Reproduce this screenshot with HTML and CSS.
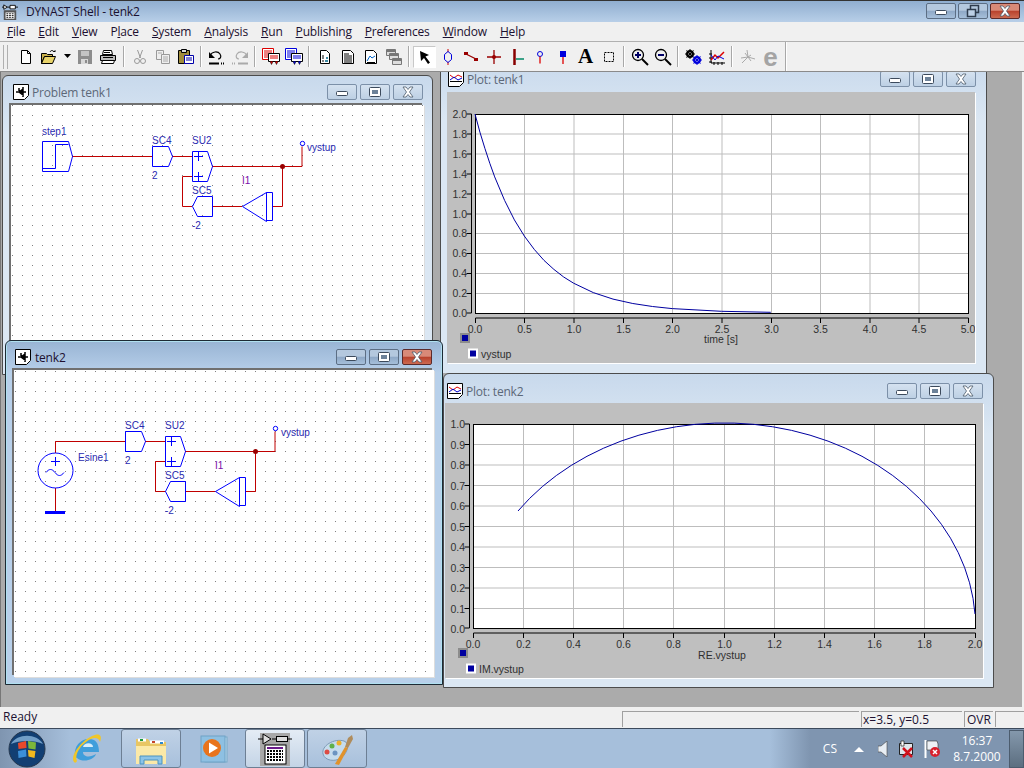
FILE: index.html
```html
<!DOCTYPE html>
<html lang="en">

<head>
    <meta charset="UTF-8">
    <title>DYNAST Shell - tenk2</title>
    <link rel="stylesheet" href="styles.css">
</head>

<body>
    <svg class="defs" width="0" height="0">
        <symbol id="g-min" viewBox="0 0 30 16"><rect x="9.500" y="7.500" width="11" height="4" rx="1" fill="#fff" stroke="#3c4a5c"/></symbol>
        <symbol id="g-max" viewBox="0 0 30 16"><rect x="9.500" y="3.500" width="11" height="9" rx="1" fill="#fff" stroke="#3c4a5c"/><rect x="12" y="6" width="6" height="4" fill="#6d8299"/></symbol>
        <symbol id="g-close" viewBox="0 0 30 16"><path d="M10 3h3l2 2.500 2-2.500h3l-3.500 5 3.500 5h-3l-2-2.500-2 2.500h-3l3.500-5z" fill="#fff" stroke="#4c5a6a" stroke-width=".8"/></symbol>
        <symbol id="g-restore" viewBox="0 0 30 16"><rect x="12.500" y="2.500" width="8" height="7" fill="none" stroke="#2e3c4e" stroke-width="1.500"/><rect x="9.500" y="6.500" width="8" height="7" fill="#bcd0e6" stroke="#2e3c4e" stroke-width="1.500"/></symbol>
        <symbol id="i-schem" viewBox="0 0 16 16"><path d="M.5.500h15v11l-4 4h-11z" fill="#fff" stroke="#000"/><path d="M3 8h3M10 5l-4 3 4 3zM10 3v10M10 8h3M6 4v3" stroke="#000" stroke-width="1.500" fill="#000"/></symbol>
        <symbol id="i-plot" viewBox="0 0 16 16"><path d="M.5.500h15v11l-4 4h-11z" fill="#fff" stroke="#000"/><path d="M2 4l4 3 4-3 4 2" stroke="#d00" fill="none"/><path d="M2 9l4-3 4 3 4-2" stroke="#00c" fill="none"/><path d="M2 10.500h12" stroke="#000"/></symbol>
        <pattern id="dots-a" width="10" height="10" patternUnits="userSpaceOnUse" x="2" y="5"><rect width="1" height="1" fill="#808080"/></pattern>
        <pattern id="dots-d" width="10" height="10" patternUnits="userSpaceOnUse" x="5" y="1"><rect width="1" height="1" fill="#808080"/></pattern>
    </svg>

    <header class="app-title">
        <svg class="app-icon" width="16" height="16" viewBox="0 0 18 18">
            <path d="M0 3.500h2M6 3.500h3M15 3.500h3M2 1v5l4-2.500zM9 1.500h6v4h-6z" stroke="#000" fill="#fff"/>
            <rect x="2" y="7" width="14" height="11" fill="#555"/>
            <path d="M4 9.500h10v7h-10z" fill="#fff"/>
            <path d="M5 11h2M8 11h2M11 11h2M5 13h2M8 13h2M11 13h2M5 15h2M8 15h2M11 15h2" stroke="#000"/>
        </svg>
        <span class="app-name">DYNAST Shell - tenk2</span>
        <div class="app-btns">
            <span class="capt capt-app"><svg width="30" height="16"><use href="#g-min"/></svg></span>
            <span class="capt capt-app"><svg width="30" height="16"><use href="#g-restore"/></svg></span>
            <span class="capt capt-app capt-red"><svg width="30" height="16"><use href="#g-close"/></svg></span>
        </div>
    </header>

    <nav class="menu">
        <span><u>F</u>ile</span>
        <span><u>E</u>dit</span>
        <span><u>V</u>iew</span>
        <span>P<u>l</u>ace</span>
        <span><u>S</u>ystem</span>
        <span><u>A</u>nalysis</span>
        <span><u>R</u>un</span>
        <span><u>P</u>ublishing</span>
        <span><u>P</u>references</span>
        <span><u>W</u>indow</span>
        <span><u>H</u>elp</span>
    </nav>

    <div class="toolbar">
        <div class="grip"></div>
        <!-- file -->
        <span class="tool"><svg width="16" height="16"><path d="M3.500 1.500h6l3 3v10h-9z" fill="#fff" stroke="#000"/><path d="M9.500 1.500v3h3" fill="none" stroke="#000"/></svg></span>
        <span class="tool"><svg width="18" height="16"><path d="M1.500 4.500h5l1 1h5v2h-8l-3 7z" fill="#c9b04a" stroke="#000"/><path d="M1.500 14.500l3-7h11l-3 7z" fill="#e8d36a" stroke="#000"/><path d="M10 3c1-2 3-2 4 0" fill="none" stroke="#000"/><path d="M12.500 3h3v-2z" fill="#000"/></svg></span>
        <span class="tool-drop"><svg width="8" height="5"><path d="M0 0h7l-3.500 4z" fill="#000"/></svg></span>
        <span class="tool"><svg width="16" height="16"><path d="M1 1h14v14h-14z" fill="#8d8d8d"/><path d="M4 2h8v5h-8z" fill="#c4c4c4"/><path d="M4 10h7v5h-7z" fill="#d8d8d8"/><path d="M8 11h2v3h-2z" fill="#8d8d8d"/></svg></span>
        <span class="tool"><svg width="18" height="16"><path d="M4.500 1.500h8l1 4h-10z" fill="#fff" stroke="#000"/><path d="M1.500 6.500h15v5h-15z" fill="#bbb" stroke="#000"/><path d="M3.500 11.500h12l-1 3h-12z" fill="#fff" stroke="#000"/><path d="M5 3.500h6M4 8.500h10" stroke="#000"/></svg></span>
        <i class="sep sep-wide"></i>
        <!-- edit, greyed out -->
        <span class="tool"><svg width="16" height="16" fill="none" stroke="#999"><path d="M5.500 1l3 8M10.500 1l-3 8"/><circle cx="5" cy="12" r="2.500"/><circle cx="11" cy="12" r="2.500"/></svg></span>
        <span class="tool"><svg width="16" height="16"><path d="M1.500 1.500h7v9h-7z" fill="#eee" stroke="#999"/><path d="M6.500 5.500h8v9h-8z" fill="#eee" stroke="#999"/><path d="M8 8h5M8 10h5M8 12h5M3 4h4" stroke="#aaa"/></svg></span>
        <span class="tool"><svg width="18" height="17"><path d="M1.500 2.500h11v13h-11z" fill="#a08c3c" stroke="#000"/><path d="M4.500 1.500h5v3h-5z" fill="#ddd" stroke="#000"/><path d="M7.500 7.500h9v8h-9z" fill="#fff" stroke="#00a"/><path d="M9 10h6M9 12h6" stroke="#00a"/></svg></span>
        <i class="sep"></i>
        <span class="tool"><svg width="18" height="16"><path d="M2 7c2-5 8-5 10-2 2 3 0 5-2 5" fill="none" stroke="#000" stroke-width="1.200"/><path d="M1 3v6h6z" fill="#000"/><path d="M1 14.500h10" stroke="#000" stroke-width="2"/><path d="M13 14.500h4" stroke="#000" stroke-dasharray="1 1" stroke-width="2"/></svg></span>
        <span class="tool"><svg width="18" height="16"><path d="M16 7c-2-5-8-5-10-2-2 3 0 5 2 5" fill="none" stroke="#aaa" stroke-width="1.200"/><path d="M17 3v6h-6z" fill="#aaa"/><path d="M7 14.500h10" stroke="#aaa" stroke-width="2"/><path d="M1 14.500h4" stroke="#aaa" stroke-dasharray="1 1" stroke-width="2"/></svg></span>
        <i class="sep"></i>
        <!-- run -->
        <span class="tool"><svg width="18" height="17"><path d="M.5.500h11v11h-11z" fill="#fff" stroke="#d00"/><path d="M2 3h8M2 5h8M2 7h8M2 9h8" stroke="#d00"/><path d="M6.500 5.500h11v8h-11z" fill="#fff" stroke="#000"/><path d="M8 8h8M8 10h8" stroke="#d00"/><path d="M8 13.500l1.500 3 1.500-3M13 13.500l1.500 3 1.500-3" fill="#d00" stroke="#000" stroke-width=".5"/></svg></span>
        <span class="tool"><svg width="18" height="17"><path d="M.5.500h11v11h-11z" fill="#fff" stroke="#00d"/><path d="M2 3h8M2 5h8M2 7h8M2 9h8" stroke="#00d"/><path d="M6.500 5.500h11v8h-11z" fill="#fff" stroke="#000"/><path d="M8 8h8M8 10h8" stroke="#00d"/><path d="M8 13.500l1.500 3 1.500-3M13 13.500l1.500 3 1.500-3" fill="#00d" stroke="#000" stroke-width=".5"/></svg></span>
        <i class="sep"></i>
        <!-- views -->
        <span class="tool"><svg width="16" height="16"><path d="M3.500 1.500h6l3 3v10h-9z" fill="#fff" stroke="#000"/><path d="M5 7h2M5 9h2M5 12h2" stroke="#000"/><path d="M9 9h2M8 12h3" stroke="#068" stroke-width="1.500"/></svg></span>
        <span class="tool"><svg width="16" height="16"><path d="M2.500 1.500h8l3 3v10h-11z" fill="#fff" stroke="#000"/><path d="M4 5h5M4 7h8M4 9h8M4 11h8M4 13h8" stroke="#000"/></svg></span>
        <span class="tool"><svg width="16" height="16"><path d="M2.500 1.500h8l3 3v10h-11z" fill="#fff" stroke="#000"/><path d="M4 12l3-5 2 2 3-2" fill="none" stroke="#06c"/><path d="M4 13.500h8" stroke="#000"/></svg></span>
        <span class="tool"><svg width="16" height="16" fill="#ddd" stroke="#777"><path d="M.5.500h9v6h-9z"/><path d="M3.500 4.500h9v6h-9z"/><path d="M6.500 9.500h9v6h-9z"/><path d="M1 2h8M4 6h8M7 11h8" stroke-width="2"/></svg></span>
        <i class="sep"></i>
        <!-- place tools -->
        <span class="tool tool-on"><svg width="16" height="16"><path d="M3 2l9 4-3.500 1.500 4.500 6-2 1.500-4-6-3 3z" fill="#000"/></svg></span>
        <span class="tool"><svg width="16" height="16" fill="none"><path d="M8 0v3M8 13v3" stroke="#c00"/><path d="M8 2.500l3.500 3v5l-3.500 3-3.500-3v-5z" stroke="#00d"/></svg></span>
        <span class="tool"><svg width="16" height="16"><path d="M3 5l10 5" stroke="#900" stroke-width="1.300"/><rect x="1" y="3" width="4" height="3" fill="#900"/><rect x="11" y="9" width="4" height="3" fill="#900"/></svg></span>
        <span class="tool"><svg width="16" height="16"><path d="M1 8h14M8 1v14" stroke="#900" stroke-width="1.300"/><circle cx="8" cy="8" r="2" fill="#900"/></svg></span>
        <span class="tool"><svg width="16" height="16"><path d="M5.500 0v16" stroke="#800" stroke-width="2.500"/><path d="M7 10h8" stroke="#086" stroke-width="1.500"/></svg></span>
        <span class="tool"><svg width="16" height="16" fill="none"><circle cx="8" cy="5" r="2.500" stroke="#00d"/><path d="M8 7.500v7" stroke="#d00" stroke-width="1.300"/></svg></span>
        <span class="tool"><svg width="16" height="16"><rect x="5" y="2" width="6" height="6" fill="#00d"/><path d="M8 8v7" stroke="#d00" stroke-width="1.300"/></svg></span>
        <span class="tool tool-a">A</span>
        <span class="tool"><svg width="16" height="16"><rect x="3.500" y="3.500" width="9" height="9" fill="none" stroke="#000" stroke-dasharray="2 1"/></svg></span>
        <i class="sep"></i>
        <!-- zoom -->
        <span class="tool"><svg width="18" height="18" fill="none"><circle cx="7" cy="7" r="5.500" stroke="#000" stroke-width="1.300"/><path d="M4 7h6M7 4v6" stroke="#006" stroke-width="2"/><path d="M11 11l6 6" stroke="#000" stroke-width="2"/></svg></span>
        <span class="tool"><svg width="18" height="18" fill="none"><circle cx="7" cy="7" r="5.500" stroke="#000" stroke-width="1.300"/><path d="M4 7h6" stroke="#006" stroke-width="2"/><path d="M11 11l6 6" stroke="#000" stroke-width="2"/></svg></span>
        <i class="sep"></i>
        <span class="tool"><svg width="18" height="16" fill="none"><circle cx="5" cy="5" r="3" stroke="#000" stroke-width="2"/><path d="M5 0v10M0 5h10M1.500 1.500l7 7M8.500 1.500l-7 7" stroke="#000"/><circle cx="12" cy="11" r="3" stroke="#00d" stroke-width="2"/><path d="M12 6v10M7 11h10M8.500 7.500l7 7M15.500 7.500l-7 7" stroke="#00d"/></svg></span>
        <span class="tool"><svg width="18" height="16" fill="none"><path d="M3 1v13h14M1 5h3M1 9h3M1 13h3M6 13v3M10 13v3M14 13v3" stroke="#000"/><path d="M3 11l4-5 3 3 6-6" stroke="#d00" stroke-width="1.500"/><path d="M3 6l4 5 3-4 6 3" stroke="#00d"/></svg></span>
        <i class="sep"></i>
        <span class="tool"><svg width="18" height="16" fill="none" stroke="#aaa"><path d="M8 1l1 7M3 14l6-6 7 2"/><path d="M6 4l3 4-7 1M12 6l-3 2 3 4"/></svg></span>
        <span class="tool tool-e">e</span>
        <i class="sep sep-end"></i>
    </div>

    <main class="mdi">

        <section class="win win-schem win-a">
            <div class="win-head">
                <svg width="16" height="16"><use href="#i-schem"/></svg>
                <span class="win-name">Problem tenk1</span>
                <div class="capts">
                    <span class="capt"><svg width="30" height="16"><use href="#g-min"/></svg></span>
                    <span class="capt"><svg width="30" height="16"><use href="#g-max"/></svg></span>
                    <span class="capt"><svg width="30" height="16"><use href="#g-close"/></svg></span>
                </div>
            </div>
            <svg class="sheet" viewBox="11 105 413 240">
                <rect x="11" y="105" width="413" height="240" fill="url(#dots-a)"/>
                <!-- wires -->
                <g class="wire">
                    <path d="M72 156.500h80"/>
                    <path d="M172 156.500h20M212 166.500h90v-20M192 176.500h-9.500v30h9.500M212 206.500h30M272 206.500h10.500v-40"/>
                </g>
                <circle cx="282.500" cy="166.500" r="2.500" fill="#900"/>
                <!-- blocks -->
                <g class="block">
                    <path d="M42.500 141.500h26l4 15-4 15h-26zM42.500 168.500h13v-24h13"/>
                    <path d="M152.500 146.500h16l4 10-4 10h-16z"/>
                    <path d="M192.500 151.500h15l5 15-5 15h-15z"/>
                    <path d="M194 156.500h9M198.500 152v9M194 176.500h9M198.500 172v9"/>
                    <path d="M192.500 206.500l5-10h15v20h-15z"/>
                    <path d="M242.500 206.500l24-14v29zM266.500 192.500h6v28h-6z"/>
                    <circle cx="302.500" cy="143.500" r="2.200"/>
                </g>
                <g class="lbl">
                    <text x="42" y="135">step1</text>
                    <text x="152" y="144">SC4</text>
                    <text x="152" y="179">2</text>
                    <text x="192" y="144">SU2</text>
                    <text x="192" y="194">SC5</text>
                    <text x="192" y="229">-2</text>
                    <text x="307" y="151">vystup</text>
                    <text class="lbl-i" x="242" y="184">I1</text>
                </g>
            </svg>
        </section>

        <section class="win win-plot win-b">
            <div class="win-head">
                <svg width="16" height="16"><use href="#i-plot"/></svg>
                <span class="win-name">Plot: tenk1</span>
                <div class="capts">
                    <span class="capt"><svg width="30" height="16"><use href="#g-min"/></svg></span>
                    <span class="capt"><svg width="30" height="16"><use href="#g-max"/></svg></span>
                    <span class="capt"><svg width="30" height="16"><use href="#g-close"/></svg></span>
                </div>
            </div>
            <svg class="chart" viewBox="447 92 528 271">
                <rect x="475" y="114" width="493" height="199" fill="#fff"/>
                <path class="grid" d="M524.500 114v199M574 114v199M623.500 114v199M672.500 114v199M722 114v199M771.500 114v199M820.500 114v199M870 114v199M919 114v199M475 134h493M475 154h493M475 174h493M475 194h493M475 214h493M475 233.500h493M475 253.500h493M475 273.500h493M475 293.500h493"/>
                <rect class="frame" x="475.500" y="114.500" width="493" height="199"/>
                <polyline class="curve" points="475,114 479.900,132.100 484.900,148.400 489.800,163.300 494.700,176.900 504.600,200.400 514.400,219.900 524.300,236 534.200,249.300 544,260.400 553.900,269.400 563.700,277 573.600,283.200 593.300,292.600 613,299.100 632.800,303.500 652.500,306.500 672.200,308.600 721.500,311.300 770.800,312.300"/>
                <path class="axis" d="M471.500 114v199h-5M471.500 114h-5M466.500 134h5M466.500 154h5M466.500 174h5M466.500 194h5M466.500 214h5M466.500 233.500h5M466.500 253.500h5M466.500 273.500h5M466.500 293.500h5"/>
                <path class="axis" d="M475.500 323v-5h493v5M524.500 318v5M574 318v5M623.500 318v5M672.500 318v5M722 318v5M771.500 318v5M820.500 318v5M870 318v5M919 318v5"/>
                <g class="tick tick-y">
                    <text x="467" y="118">2.0</text><text x="467" y="138">1.8</text><text x="467" y="158">1.6</text><text x="467" y="178">1.4</text><text x="467" y="198">1.2</text><text x="467" y="218">1.0</text><text x="467" y="237">0.8</text><text x="467" y="257">0.6</text><text x="467" y="277">0.4</text><text x="467" y="297">0.2</text><text x="467" y="317">0.0</text>
                </g>
                <g class="tick tick-x">
                    <text x="475" y="333">0.0</text><text x="524.500" y="333">0.5</text><text x="574" y="333">1.0</text><text x="623.500" y="333">1.5</text><text x="672.500" y="333">2.0</text><text x="722" y="333">2.5</text><text x="771.500" y="333">3.0</text><text x="820.500" y="333">3.5</text><text x="870" y="333">4.0</text><text x="919" y="333">4.5</text><text x="968" y="333">5.0</text>
                    <text x="721" y="343">time [s]</text>
                </g>
                <rect class="mark-a" x="461" y="334" width="8" height="8"/>
                <rect class="mark-b" x="469" y="349.500" width="8" height="8"/>
                <text class="tick" x="481" y="358">vystup</text>
            </svg>
        </section>

        <section class="win win-plot win-c">
            <div class="win-head">
                <svg width="16" height="16"><use href="#i-plot"/></svg>
                <span class="win-name">Plot: tenk2</span>
                <div class="capts">
                    <span class="capt"><svg width="30" height="16"><use href="#g-min"/></svg></span>
                    <span class="capt"><svg width="30" height="16"><use href="#g-max"/></svg></span>
                    <span class="capt"><svg width="30" height="16"><use href="#g-close"/></svg></span>
                </div>
            </div>
            <svg class="chart" viewBox="445 403 538 275">
                <rect x="473" y="424" width="502" height="204" fill="#fff"/>
                <path class="grid" d="M523.500 424v204M573.500 424v204M623.500 424v204M673.500 424v204M724.500 424v204M774.500 424v204M824.500 424v204M874.500 424v204M924.500 424v204M473 444.500h502M473 465h502M473 485.500h502M473 506h502M473 526.500h502M473 547h502M473 567.500h502M473 588h502M473 608.500h502"/>
                <rect class="frame" x="473.500" y="424.500" width="502" height="204"/>
                <path class="curve" d="M518 511A251 204 0 0 1 975 614"/>
                <path class="axis" d="M469.500 424v204h-5M469.500 424h-5M464.500 444.500h5M464.500 465h5M464.500 485.500h5M464.500 506h5M464.500 526.500h5M464.500 547h5M464.500 567.500h5M464.500 588h5M464.500 608.500h5"/>
                <path class="axis" d="M473.500 638v-5h502v5M523.500 633v5M573.500 633v5M623.500 633v5M673.500 633v5M724.500 633v5M774.500 633v5M824.500 633v5M874.500 633v5M924.500 633v5"/>
                <g class="tick tick-y">
                    <text x="465" y="428">1.0</text><text x="465" y="449">0.9</text><text x="465" y="469">0.8</text><text x="465" y="490">0.7</text><text x="465" y="510">0.6</text><text x="465" y="531">0.5</text><text x="465" y="551">0.4</text><text x="465" y="572">0.3</text><text x="465" y="592">0.2</text><text x="465" y="613">0.1</text><text x="465" y="633">0.0</text>
                </g>
                <g class="tick tick-x">
                    <text x="473" y="648">0.0</text><text x="523.500" y="648">0.2</text><text x="573.500" y="648">0.4</text><text x="623.500" y="648">0.6</text><text x="673.500" y="648">0.8</text><text x="724.500" y="648">1.0</text><text x="774.500" y="648">1.2</text><text x="824.500" y="648">1.4</text><text x="874.500" y="648">1.6</text><text x="924.500" y="648">1.8</text><text x="975" y="648">2.0</text>
                    <text x="722" y="659">RE.vystup</text>
                </g>
                <rect class="mark-a" x="459" y="649" width="8" height="8"/>
                <rect class="mark-b" x="467" y="664.500" width="8" height="8"/>
                <text class="tick" x="479" y="673">IM.vystup</text>
            </svg>
        </section>

        <section class="win win-schem win-d win-active">
            <div class="win-head">
                <svg width="16" height="16"><use href="#i-schem"/></svg>
                <span class="win-name">tenk2</span>
                <div class="capts">
                    <span class="capt"><svg width="30" height="16"><use href="#g-min"/></svg></span>
                    <span class="capt"><svg width="30" height="16"><use href="#g-max"/></svg></span>
                    <span class="capt capt-red"><svg width="30" height="16"><use href="#g-close"/></svg></span>
                </div>
            </div>
            <svg class="sheet" viewBox="14 370 420 307">
                <rect x="14" y="370" width="420" height="307" fill="url(#dots-d)"/>
                <g class="wire">
                    <path d="M55.500 453v-11.500h70"/>
                    <path d="M145 441.500h20M185 451.500h90v-20M165 461.500h-9.500v30h9.500M185 491.500h30M245 491.500h10.500v-40M55.500 488v24"/>
                </g>
                <circle cx="255.500" cy="451.500" r="2.500" fill="#900"/>
                <g class="block">
                    <circle cx="55.500" cy="470.500" r="17.500"/>
                    <path d="M51 461.500h9M55.500 457v9M46 472.500c3-4 6-4 9 0s6 4 9 0"/>
                    <path d="M125.500 431.500h16l4 10-4 10h-16z"/>
                    <path d="M165.500 436.500h15l5 15-5 15h-15z"/>
                    <path d="M167 441.500h9M171.500 437v9M167 461.500h9M171.500 457v9"/>
                    <path d="M165.500 491.500l5-10h15v20h-15z"/>
                    <path d="M215.500 491.500l24-14v29zM239.500 477.500h6v28h-6z"/>
                    <circle cx="275.500" cy="428.500" r="2.200"/>
                </g>
                <rect x="45" y="511" width="20" height="3" fill="#00f"/>
                <g class="lbl">
                    <text x="78" y="461">Esine1</text>
                    <text x="125" y="429">SC4</text>
                    <text x="125" y="464">2</text>
                    <text x="165" y="429">SU2</text>
                    <text x="165" y="479">SC5</text>
                    <text x="165" y="514">-2</text>
                    <text x="281" y="436">vystup</text>
                    <text class="lbl-i" x="215" y="469">I1</text>
                </g>
            </svg>
        </section>
    </main>

    <footer class="status">
        <span class="status-text">Ready</span>
        <span class="pane pane-a"></span>
        <span class="pane pane-b">x=3.5, y=0.5</span>
        <span class="pane pane-c">OVR</span>
        <span class="pane pane-d"></span>
    </footer>

    <div class="taskbar">
        <span class="orb">
            <svg width="38" height="38" viewBox="0 0 38 38">
                <circle cx="19" cy="19" r="18" fill="#123f73" stroke="#25364c"/>
                <path d="M3 14c6-11 26-11 32 0-8-4-24-4-32 0z" fill="#8ab6dc" opacity=".8"/>
                <path d="M10 13l8-2 .500 7-8 1z" fill="#e8492c"/>
                <path d="M20 11l8 1.500-.500 7-7-1z" fill="#7cb83a"/>
                <path d="M10 21l8-1.500.500 7-8 1.500z" fill="#3c8fd8"/>
                <path d="M20 20l7.500 1-1 7-6-1.500z" fill="#f2b91e"/>
            </svg>
        </span>
        <span class="task task-plain">
            <svg width="34" height="34" viewBox="0 0 34 34">
                <path d="M5 25C3 12 14 4 24 8c4 2 5 8 5 12H13c0 5 7 6 13 2-2 6-13 9-19 4z" fill="#3f9edb"/>
                <path d="M13 15h10c0-5-9-5-10 0z" fill="#d8eefb"/>
                <path d="M4 30C0 24 10 10 22 4c6-3 11-2 8 6-1-4-5-5-9-3C12 11 4 22 7 29c-1 2-2 2-3 1z" fill="#f0c62a"/>
            </svg>
        </span>
        <span class="task task-folder">
            <svg width="34" height="34" viewBox="0 0 34 34">
                <path d="M2 7h12l2 3h16v20H2z" fill="#e8c664"/>
                <path d="M4 8h8M16 10h14" stroke="#fff" stroke-width="3"/>
                <rect x="6" y="7" width="3" height="2" fill="#1a9a3a"/><rect x="18" y="9" width="3" height="2" fill="#c5442a"/><rect x="26" y="10" width="3" height="2" fill="#2a88d0"/>
                <path d="M2 14h30v18H2z" fill="#fbe9a8"/>
                <path d="M6 32v-8h22v8h-4v-4H10v4z" fill="#8cc4e8" stroke="#4d93c0"/>
            </svg>
        </span>
        <span class="task task-media">
            <svg width="34" height="34" viewBox="0 0 34 34">
                <rect x="10" y="5" width="22" height="25" fill="#b4d6ec" stroke="#79aac8"/>
                <rect x="6" y="4" width="24" height="26" fill="#8ec0e2" stroke="#6fa2c6"/>
                <circle cx="17" cy="16" r="9" fill="#e8741c"/>
                <path d="M14 10.500l9 5.500-9 5.500z" fill="#fff"/>
            </svg>
        </span>
        <span class="task task-on">
            <svg width="34" height="34" viewBox="0 0 34 34">
                <rect x="2" y="1" width="30" height="33" fill="#a8a8a8"/>
                <path d="M0 7h5M14 7h5M30 7h4" stroke="#000"/>
                <path d="M5 2v10l8-5z" fill="#ddd" stroke="#000"/>
                <rect x="18.500" y="4.500" width="11" height="5" fill="#ddd" stroke="#000"/>
                <rect x="7" y="13" width="21" height="19" fill="#fff" stroke="#000"/>
                <rect x="9" y="15" width="16" height="2" fill="#6a1a8a"/>
                <path d="M9 19h16M9 22h16M9 25h16M9 28h16" stroke="#000" stroke-width="2" stroke-dasharray="2 1"/>
            </svg>
        </span>
        <span class="task">
            <svg width="34" height="34" viewBox="0 0 34 34">
                <path d="M3 22C1 14 14 6 24 9c6 2 4 12-3 17-6 4-16 3-18-4z" fill="#c6dcec" stroke="#7d9ab6"/>
                <circle cx="7" cy="20" r="2.500" fill="#dc4c44"/><circle cx="12" cy="14" r="2.500" fill="#5eb04a"/><circle cx="19" cy="11" r="2.500" fill="#ecb02c"/><circle cx="15" cy="21" r="2.500" fill="#6c94c0"/>
                <path d="M15 32l10-17 3 1-9 17z" fill="#e0922c"/>
                <path d="M25 15l3-9 4-3 1 4-5 9z" fill="#b08c5c"/>
            </svg>
        </span>
        <div class="tray">
            <span class="lang">CS</span>
            <svg width="10" height="6"><path d="M0 6l5-5 5 5z" fill="#fff"/></svg>
            <svg class="tray-sound" width="10" height="16"><path d="M0 5h3l6-5v16l-6-5H0z" fill="#e8eef4" stroke="#444" stroke-width=".6"/></svg>
            <svg class="tray-net" width="18" height="18"><path d="M1.500 3.500h13v11h-13z" fill="#dfe6ec" stroke="#222"/><path d="M3 1h3v5H3z" fill="#fff" stroke="#222" stroke-width=".7"/><path d="M5 8l9 9M14 8l-9 9" stroke="#d0101c" stroke-width="2.500"/></svg>
            <svg class="tray-flag" width="16" height="18"><path d="M1.500 0v18" stroke="#fff" stroke-width="2"/><path d="M3 1h10l1 3v6H3z" fill="#eef2f6" stroke="#333" stroke-width=".6"/><circle cx="11" cy="12" r="5" fill="#d8202c"/><path d="M9 10l4 4M13 10l-4 4" stroke="#fff" stroke-width="1.500"/></svg>
            <div class="clock"><span>16:37</span><span>8.7.2000</span></div>
            <span class="show-desk"></span>
        </div>
    </div>
</body>

</html>
```

FILE: styles.css
```css
body {
    margin: 0;
    width: 1024px;
    height: 768px;
    overflow: hidden;
    display: flex;
    flex-direction: column;
    font-family: "Open Sans", "Noto Sans", sans-serif;
    font-size: 12px;
    background-color: #f0f0f0;
}

.defs {
    position: absolute;
}

/* main frame */
.app-title {
    height: 21px;
    flex: none;
    display: flex;
    align-items: center;
    padding-left: 2px;
    border-top: 1px solid #333;
    background: linear-gradient(#90aed0, #b8cfe8);
    color: #1a1030;
}

.app-icon {
    margin: 0 8px 0 0;
}

.app-name {
    font-size: 12px;
    letter-spacing: -0.15px;
}

.app-btns {
    margin-left: auto;
    margin-right: 4px;
    margin-top: -2px;
    display: flex;
    gap: 2px;
}

.capts {
    margin-left: auto;
    display: flex;
    gap: 3px;
}

.capt {
    width: 30px;
    height: 16px;
    display: block;
    border: 1px solid #7c90a8;
    box-sizing: border-box;
    border-radius: 2px;
    background: linear-gradient(#d5e2f0, #bdd0e4);
    overflow: hidden;
}

.capt svg {
    display: block;
    margin: -1px;
}

.capt-app,
.win-active .capt {
    background: linear-gradient(#b4c8de 45%, #8ea8c6 50%, #a6bfda);
    border-color: #5c6e84;
}

.capt-red,
.win-active .capt-red {
    background: linear-gradient(#d98a78 45%, #b8412c 50%, #cc6a50);
    border-color: #5c2a2a;
}

.menu {
    height: 20px;
    flex: none;
    display: flex;
    align-items: center;
    gap: 13px;
    padding-left: 7px;
    letter-spacing: -0.18px;
    color: #1c1030;
    border-bottom: 1px solid #b0b0b0;
    box-sizing: border-box;
}

.toolbar {
    height: 30px;
    flex: none;
    display: flex;
    align-items: center;
    box-sizing: border-box;
    border-bottom: 1px solid #8a8a8a;
}

.grip {
    width: 3px;
    height: 24px;
    margin: 0 6px 0 3px;
    border-left: 1px solid #b0b0b0;
    border-right: 1px solid #b0b0b0;
}

.tool {
    width: 23px;
    height: 22px;
    flex: none;
    display: flex;
    align-items: center;
    justify-content: center;
    box-sizing: border-box;
}

.tool-drop {
    width: 13px;
    margin-left: 1px;
    margin-right: -1px;
    flex: none;
    display: flex;
    align-items: center;
    justify-content: center;
}

.tool-on {
    background: #fff;
    border: 1px solid #c8c8c8;
    border-right-color: #fff;
    border-bottom-color: #fff;
}

.tool-a {
    font-family: "Liberation Serif", serif;
    font-size: 21px;
    font-weight: bold;
}

.tool-e {
    font-family: "Liberation Sans", sans-serif;
    font-size: 26px;
    font-weight: bold;
    line-height: 20px;
    color: #a4a4a4;
}

.sep {
    width: 1px;
    height: 21px;
    flex: none;
    margin: 0 3px;
    background: #a8a8a8;
    border-right: 1px solid #fff;
}

.sep-wide {
    margin-left: 4px;
}

.sep-end {
    height: 29px;
}

/* MDI desktop: the child windows are free on it */
.mdi {
    flex: 1;
    position: relative;
    overflow: hidden;
    background: #ababab;
    border-left: 1px solid #777;
    border-right: 2px solid #f0f0f0;
}

.win {
    position: absolute;
    box-sizing: border-box;
    display: flex;
    flex-direction: column;
    border: 1px solid #4c4c4c;
    border-radius: 6px 6px 0 0;
    background: linear-gradient(#c8d9ec, #dbe7f3 60px);
    color: #5c6878;
}

.win-active {
    background: linear-gradient(#98b4d4, #b8d0ea 32px);
    border-color: #1c2a34;
    box-shadow: 0 0 0 1px #b0e0f0 inset;
    color: #201030;
}

.win-head {
    height: 29px;
    flex: none;
    display: flex;
    align-items: center;
    gap: 3px;
    padding: 3px 9px 0 10px;
    box-sizing: border-box;
}

.win-name {
    font-size: 12px;
    letter-spacing: -0.2px;
}

.win-a {
    left: 1px;
    top: 3px;
    width: 431px;
    height: 300px;
}

.win-b {
    left: 439px;
    top: -12px;
    width: 547px;
    height: 313px;
    border-top: none;
    border-bottom: none;
}

.win-c {
    left: 442px;
    top: 301px;
    width: 551px;
    height: 315px;
}

.win-d {
    left: 4px;
    top: 268px;
    width: 438px;
    height: 345px;
}

.win-d .win-head {
    padding-left: 9px;
    padding-right: 10px;
    gap: 4px;
}

.win-b .win-head {
    height: 32px;
    padding: 6px 10px 0 7px;
}

.win-c .win-head {
    padding: 5px 10px 0 3px;
}

.sheet {
    display: block;
    flex: none;
    margin-left: 8px;
    background: #fff;
    box-shadow: -2px -2px 0 #707070, 1px 1px 0 #ddd;
}

.win-a .sheet {
    width: 413px;
    height: 240px;
}

.win-d .sheet {
    width: 420px;
    height: 307px;
}

.chart {
    display: block;
    flex: none;
    background: #bfbfbf;
    box-shadow: 1px 1px 0 #fff;
}

.win-b .chart {
    margin-left: 6px;
    width: 528px;
    height: 271px;
}

.win-c .chart {
    margin-left: 1px;
    width: 538px;
    height: 275px;
}

/* schematic */
.wire {
    fill: none;
    stroke: #c00000;
    stroke-width: 1;
}

.block {
    fill: none;
    stroke: #0000ff;
    stroke-width: 1;
}

.lbl text {
    font-family: "Liberation Sans", sans-serif;
    font-size: 10px;
    fill: #2a2ab0;
}

.lbl .lbl-i {
    fill: #7a10a8;
}

/* charts */
.grid {
    stroke: #bdbdbd;
    fill: none;
}

.frame {
    stroke: #000;
    fill: none;
}

.curve {
    stroke: #0000a0;
    fill: none;
}

.axis {
    stroke: #000;
    fill: none;
}

.tick,
.tick text {
    font-family: "Liberation Sans", sans-serif;
    font-size: 10.500px;
    fill: #303030;
}

.tick-y text {
    text-anchor: end;
}

.tick-x text {
    text-anchor: middle;
}

.mark-a {
    fill: #0000a0;
    stroke: #8c8c8c;
    stroke-width: 2;
}

.mark-b {
    fill: #0000a0;
    stroke: #fff;
    stroke-width: 2;
}

/* status bar */
.status {
    height: 21px;
    flex: none;
    display: flex;
    align-items: flex-end;
    gap: 2px;
    padding-bottom: 1px;
    box-sizing: border-box;
    color: #201030;
}

.status-text {
    flex: 1;
    padding-left: 3px;
    padding-bottom: 1px;
    align-self: center;
}

.pane {
    height: 16px;
    box-sizing: border-box;
    border-top: 1px solid #a0a0a0;
    border-left: 1px solid #a0a0a0;
    padding-left: 1px;
    line-height: 15px;
}

.pane-a {
    width: 237px;
}

.pane-b {
    width: 101px;
}

.pane-c {
    width: 29px;
    padding-left: 2px;
}

.pane-d {
    width: 29px;
}

/* windows taskbar */
.taskbar {
    height: 40px;
    flex: none;
    display: flex;
    align-items: center;
    border-top: 1px solid #3c4a5c;
    box-sizing: border-box;
    background: linear-gradient(90deg, #7f95b0, #a6bfdb 70px, #a6bfdb 770px, #7f95b0 810px);
}

.orb {
    width: 54px;
    padding-left: 8px;
    box-sizing: border-box;
    display: flex;
}

.task {
    width: 60px;
    height: 39px;
    margin-right: 2px;
    flex: none;
    display: flex;
    align-items: center;
    justify-content: center;
    box-sizing: border-box;
    border: 1px solid #6d7f94;
    border-radius: 3px;
    background: linear-gradient(#c0d2e6, #a8c0dc);
}

.task-plain {
    border: none;
    background: none;
    width: 66px;
    margin-right: 1px;
}

.task-media {
    border: none;
    background: none;
    margin: 0 3px 0 1px;
}

.task-folder {
    margin-right: 0;
}

.task-on {
    background: linear-gradient(#e4ecf5, #c4d4e6);
}

.tray {
    margin-left: auto;
    height: 100%;
    display: flex;
    align-items: center;
    color: #fff;
}

.lang {
    margin-right: 17px;
}

.tray-sound {
    margin-left: 14px;
}

.tray-net {
    margin-left: 10px;
}

.tray-flag {
    margin-left: 8px;
}

.clock {
    width: 60px;
    margin-left: 7px;
    display: flex;
    flex-direction: column;
    align-items: center;
    line-height: 16px;
}

.show-desk {
    width: 15px;
    height: 38px;
    margin-left: 2px;
    border: 1px solid #4c5c6e;
    box-sizing: border-box;
    background: linear-gradient(#8498ac, #5c6e80);
}
```
